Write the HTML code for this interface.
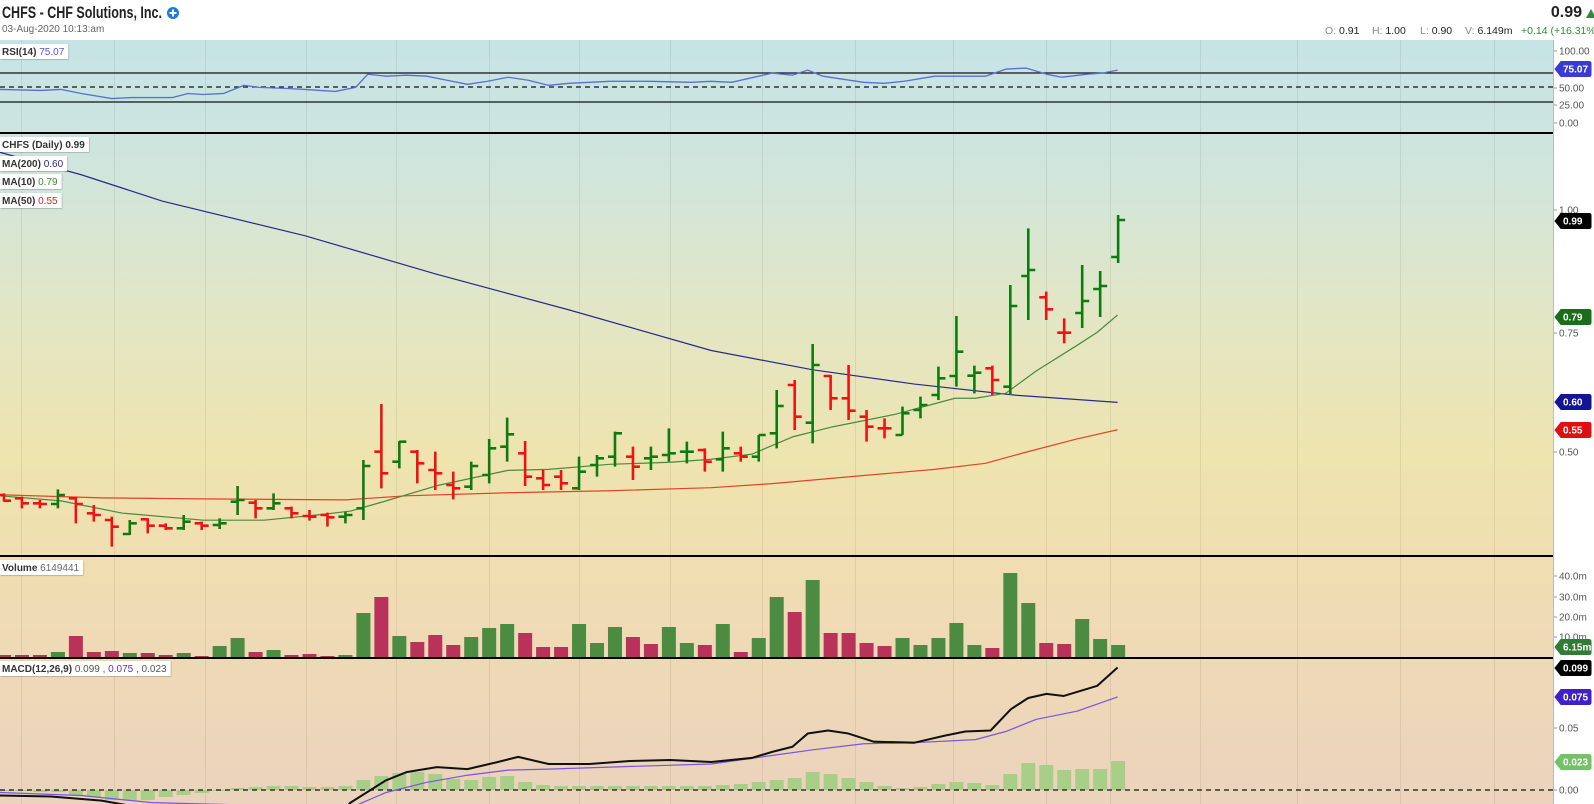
<!DOCTYPE html>
<html><head><meta charset="utf-8"><style>
html,body{margin:0;padding:0;background:#fff;width:1594px;height:804px;overflow:hidden}
svg{display:block;font-family:"Liberation Sans",sans-serif}
</style></head><body>
<svg id="s" width="1594" height="804" xmlns="http://www.w3.org/2000/svg">
<defs>
<linearGradient id="bg" x1="0" y1="40" x2="0" y2="804" gradientUnits="userSpaceOnUse">
<stop offset="0" stop-color="#c6e4e6"/>
<stop offset="0.16" stop-color="#cfe5dd"/>
<stop offset="0.35" stop-color="#e2e6c6"/>
<stop offset="0.55" stop-color="#eee4ae"/>
<stop offset="0.7" stop-color="#f0ddb2"/>
<stop offset="1" stop-color="#ebd3bd"/>
</linearGradient>
<filter id="sh"><feDropShadow dx="0.5" dy="0.5" stdDeviation="0.6" flood-opacity="0.35"/></filter>
</defs>
<rect x="0" y="40" width="1553" height="764" fill="url(#bg)"/>
<g id="grid" stroke="#000" stroke-opacity="0.07" stroke-width="1"></g>
<text x="2" y="18" font-size="17" font-weight="bold" fill="#222" textLength="160" lengthAdjust="spacingAndGlyphs">CHFS - CHF Solutions, Inc.</text>
<circle cx="173" cy="13" r="6" fill="#1f7bd8"/>
<path d="M173 9.5v7M169.5 13h7" stroke="#fff" stroke-width="2"/>
<text x="2" y="32" font-size="10" fill="#666">03-Aug-2020 10:13:am</text>
<text x="1582" y="17" font-size="16" font-weight="bold" fill="#222" text-anchor="end">0.99</text>
<path d="M1586 18l5 -9 5 9z" fill="#2e8b3a"/>
<g font-size="10.5">
<text x="1325" y="34" fill="#888">O: <tspan fill="#222">0.91</tspan></text>
<text x="1372" y="34" fill="#888">H: <tspan fill="#222">1.00</tspan></text>
<text x="1420" y="34" fill="#888">L: <tspan fill="#222">0.90</tspan></text>
<text x="1465" y="34" fill="#888">V: <tspan fill="#222">6.149m</tspan></text>
<text x="1521" y="34" fill="#2e8b3a">+0.14 (+16.31%)</text>
</g>
<line x1="0" y1="73" x2="1553" y2="73" stroke="#111" stroke-width="1.2"/>
<line x1="0" y1="87" x2="1553" y2="87" stroke="#111" stroke-width="1.2" stroke-dasharray="5,4"/>
<line x1="0" y1="102" x2="1553" y2="102" stroke="#111" stroke-width="1.2"/>
<g id="bars"></g>
<line x1="0" y1="790" x2="1553" y2="790" stroke="#111" stroke-width="1.2" stroke-dasharray="5,4"/>
<g id="main" transform="scale(1.016)"></g>
<g id="pbars"></g>
<line x1="0" y1="133" x2="1553" y2="133" stroke="#000" stroke-width="2"/>
<line x1="0" y1="556" x2="1553" y2="556" stroke="#000" stroke-width="2"/>
<line x1="0" y1="658" x2="1553" y2="658" stroke="#000" stroke-width="2"/>
<line x1="1553.5" y1="40" x2="1553.5" y2="804" stroke="#bbb"/>
<g id="axis" font-size="10" fill="#555"></g>
<g id="labels" font-size="10" font-weight="bold" fill="#333"></g>
</svg>
<script>
var NS="http://www.w3.org/2000/svg";
function el(p,t,a,txt){var e=document.createElementNS(NS,t);for(var k in a)e.setAttribute(k,a[k]);if(txt!==undefined)e.textContent=txt;p.appendChild(e);return e;}
var grid=document.getElementById('grid');
[21,114,205,306,396,489,579,670,762,855,953,1046,1110,1200,1297,1400,1494].forEach(function(x){el(grid,'line',{x1:x+.5,y1:40,x2:x+.5,y2:804});});
var main=document.getElementById('main');
function poly(pts,c,w){el(main,'polyline',{points:pts.map(function(p){return p.join(',')}).join(' '),fill:'none',stroke:c,'stroke-width':w,'stroke-linejoin':'round'});}
poly([[0,88],[40,89],[60,88],[80,92],[110,97],[130,96],[170,96],[185,92],[200,93],[220,92],[240,84],[255,86],[280,87],[300,88],[330,90],[350,86],[362,73],[380,75],[400,74],[420,75],[440,79],[460,83],[480,80],[500,76],[520,79],[540,84],[560,82],[600,80],[640,80],[680,81],[700,80],[720,81],[760,72],[780,74],[795,69],[810,75],[850,81],[870,82],[890,80],[920,75],[970,75],[990,68],[1010,67],[1030,73],[1045,76],[1070,73],[1085,72],[1100,69]],'#5a6fd2',1.3);
poly([[0,150],[80,172],[160,198],[300,232],[430,270],[560,305],[700,345],[800,364],[900,378],[1000,389],[1100,396]],'#2a2a8a',1.2);
poly([[0,487],[100,490],[200,491],[340,492],[400,488],[500,485],[600,483],[700,480],[760,476],[850,468],[920,462],[970,456],[1010,445],[1060,432],[1100,423]],'#e0442a',1.2);
poly([[0,488],[60,493],[120,505],[200,512],[260,512],[320,506],[345,503],[380,493],[430,478],[500,463],[540,462],[600,457],[660,455],[700,452],[740,447],[780,430],[820,420],[880,408],[940,392],[960,392],[990,387],[1020,365],[1060,340],[1080,327],[1100,310]],'#4b8a3c',1.2);
var bars=document.getElementById('bars');
var pbars=document.getElementById('pbars');
var X=function(i){return 4+i*17.97;};
var hz=790;
var hist=[791,791,792,792,795,797,800,800,800,797,795,793,791,788,787,786,786,787,787,786,780,776,773,772,774,779,780,777,776,782,785,786,786,786,786,786,786,786,786,786,785,784,782,780,778,772,774,778,782,786,788,787,784,782,783,785,774,763,765,770,769,769,761];
hist.forEach(function(t,i){var y=Math.min(t,hz),h=Math.abs(t-hz);if(h<1)h=1;el(bars,'rect',{x:X(i)-7,y:y,width:14,height:h,fill:'#a8cf88'});});
poly([[0,780],[80,783],[150,790],[345,795],[380,780],[420,770],[460,763],[500,758],[540,757],[600,755],[700,752],[750,745],[800,738],[850,732],[900,731],[960,728],[990,720],[1020,708],[1060,700],[1100,686]],'#7a55dd',1.2);
poly([[0,783],[50,784],[100,788],[150,797],[200,805],[330,805],[345,790],[380,768],[400,760],[430,755],[460,757],[490,750],[510,745],[540,752],[580,752],[620,749],[660,748],[700,750],[740,746],[760,740],[780,735],[795,722],[815,719],[835,722],[860,730],[900,731],[930,724],[950,720],[975,719],[995,698],[1012,687],[1030,683],[1047,685],[1080,675],[1100,657]],'#111',2);
var vol=[['r',655],['r',655],['r',655],['g',652],['r',636],['r',652],['r',651],['g',653],['r',653],['r',655],['g',653],['r',656],['g',646],['g',638],['r',652],['g',650],['r',655],['r',654],['r',656],['g',655],['g',613],['r',597],['g',636],['r',642],['r',635],['r',645],['g',637],['g',628],['g',624],['r',633],['r',647],
['r',647],['g',624],['g',643],['g',627],['r',637],['r',644],['g',627],['g',643],['r',645],['g',624],['r',652],['g',638],['g',597],['r',612],['g',580],['r',633],['r',633],['r',643],['r',646],['g',638],['g',645],['g',638],['g',623],['g',645],['r',648],['g',573],['g',603],['r',643],['r',644],['g',619],['g',639],['g',645]];
vol.forEach(function(v,i){el(bars,'rect',{x:X(i)-7,y:v[1],width:14,height:657-v[1],fill:v[0]=='g'?'#4c8c42':'#b8325a'});});
var A=[['r',340,365,345,362],['r',350,385,355,370],['r',360,385,370,372],['g',328,385,372,345],['r',350,430,355,372],['r',375,425,400,405],['r',410,500,420,440],['g',420,465,462,430],['r',415,460,418,437],['r',430,450,437,445],['g',405,450,445,425],['r',425,450,430,437],['g',415,447,435,430],['g',318,405,365,360],['r',360,415,368,385],['g',340,390,385,370],['r',380,415,385,400],['r',390,422,408,410],['r',398,440,405,412],['g',395,430,410,405],['g',240,420,385,258],['r',72,325,215,280],['g',183,265,245,185],['r',210,310,215,250],['r',215,330,270,280],['r',275,358,315,325],['g',245,330,320,258],['g',177,310,285,205],['g',113,245,200,163],['r',183,318,220,290],['r',270,330,295,315]];
var B=[['r',810,870,830,850],['g',770,870,865,815],['g',765,830,795,775],['g',695,800,770,700],['r',740,840,770,800],['g',740,810,775,770],['g',685,785,765,760],['g',725,790,755,755],['r',745,815,750,785],['g',695,815,778,745],['r',740,785,760,770],['g',705,785,770,705],['g',570,745,700,618],['r',540,690,555,650],['g',432,730,668,495],['r',525,630,528,595],['r',495,660,595,632],['r',630,725,650,680],['r',655,715,685,685],['g',620,705,705,640],['g',590,655,630,615],['g',500,600,585,535],['g',348,560,528,455],['g',497,580,527,518],['r',497,585,505,540],['g',255,585,560,318],['g',85,360,228,210],['r',275,360,292,328],['r',355,430,398,398]];
var P=[];A.forEach(function(b){P.push([b[0],380+b[1]/3,380+b[2]/3,380+b[3]/3,380+b[4]/3]);});
B.forEach(function(b){P.push([b[0],200+b[1]/3,200+b[2]/3,200+b[3]/3,200+b[4]/3]);});
P.push(['g',265,328,313,301]);P.push(['g',271,317,289,286]);P.push(['g',215,263,257,220]);
P.forEach(function(b,i){var x=X(i),c=b[0]=='g'?'#0f7a12':'#f01212';
el(pbars,'path',{d:'M'+x+' '+b[1]+'V'+b[2]+'M'+(x-7)+' '+b[3]+'H'+x+'M'+x+' '+b[4]+'H'+(x+7),stroke:c,'stroke-width':2.6,fill:'none'});});
var ax=document.getElementById('axis');
[['100.00',51],['50.00',88],['25.00',105],['0.00',123],['1.00',210],['0.75',333],['0.50',452],['40.0m',576],['30.0m',597],['20.0m',617],['10.0m',637],['0.05',728],['0.00',790]].forEach(function(t){
el(ax,'line',{x1:1554,y1:t[1],x2:1557,y2:t[1],stroke:'#999'});el(ax,'text',{x:1559,y:t[1]+3.5},t[0]);});
function badge(v,y,bg,fg){var d='M1555 '+y+'L1561 '+(y-7.5)+'H1589Q1591 '+(y-7.5)+' 1591 '+(y-5.5)+'V'+(y+5.5)+'Q1591 '+(y+7.5)+' 1589 '+(y+7.5)+'H1561Z';
el(ax,'path',{d:d,fill:bg,stroke:bg});el(ax,'text',{x:1563,y:y+3.5,fill:fg,'font-weight':'bold'},v);}
badge('75.07',69,'#3a3ad4','#fff');
badge('0.99',221,'#000','#fff');
badge('0.79',317,'#1a6e1a','#fff');
badge('0.60',402,'#141496','#fff');
badge('0.55',430,'#dd1111','#fff');
badge('6.15m',647,'#2f7d34','#fff');
badge('0.099',668,'#000','#fff');
badge('0.075',697,'#4020c8','#fff');
badge('0.023',762,'#74c266','#fff');
var lb=document.getElementById('labels');
function label(y,parts){var r=el(lb,'rect',{x:0,y:y,width:50,height:15,fill:'#fff',filter:'url(#sh)'});var t=el(lb,'text',{x:2,y:y+11});parts.forEach(function(p){el(t,'tspan',{fill:p[1],'font-weight':p[2]?'bold':'normal'},p[0]);});
try{r.setAttribute('width',t.getComputedTextLength()+6);}catch(e){}}
label(44,[['RSI(14) ','#333',1],['75.07','#5555cc']]);
label(137,[['CHFS (Daily) 0.99','#333',1]]);
label(156,[['MA(200) ','#333',1],['0.60','#2a2a8a']]);
label(174,[['MA(10) ','#333',1],['0.79','#3a8a30']]);
label(193,[['MA(50) ','#333',1],['0.55','#dd2222']]);
label(560,[['Volume ','#333',1],['6149441','#666']]);
label(661,[['MACD(12,26,9) ','#333',1],['0.099 , ','#555'],['0.075','#5533cc'],[' , 0.023','#555']]);
</script>
</body></html>
